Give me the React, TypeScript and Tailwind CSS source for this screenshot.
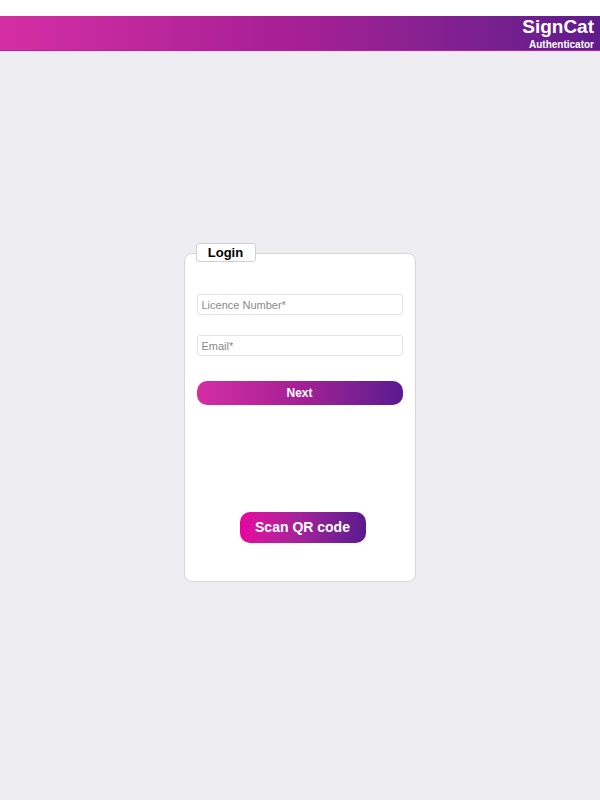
const Header = () => {
    return (
        <div className="bg-white pt-4">
            <div className="h-[35px] bg-gradient-to-r from-[#d52ea4] via-[#a51f94] to-[#601b8c] border-b border-[#c21ba0] flex flex-col items-end justify-center pr-[6px] pt-[2px]">
                <span className="text-white font-bold text-[19px] leading-[20px]">SignCat</span>
                <span className="text-white font-bold text-[10px] leading-[12px] mt-[2px]">Authenticator</span>
            </div>
        </div>
    )
}

const App = () => {
    return (
        <div className="w-[600px] h-[800px] bg-[#eeedf2] font-['Liberation_Sans',Arial,sans-serif]">
            <Header />
            <div className="flex justify-center pt-[202px] pr-[1px]">
                <div className="relative w-[232px] h-[329px] bg-white border border-[#d6d6d8] rounded-[8px] px-3 pt-10">
                    <div className="absolute left-[11px] -top-[11px] w-[60px] h-[19px] bg-white border border-[#cfcfd2] rounded-[3px] flex items-center justify-center">
                        <span className="text-[13px] font-bold text-black leading-none">Login</span>
                    </div>
                    <form className="flex flex-col">
                        <input
                            type="text"
                            placeholder="Licence Number*"
                            className="h-[21px] border border-[#e3e3e6] rounded-[3px] px-1 text-[11px] placeholder:text-[#8a8a8e] outline-none"
                        />
                        <input
                            type="email"
                            placeholder="Email*"
                            className="mt-[20px] h-[21px] border border-[#e3e3e6] rounded-[3px] px-1 text-[11px] placeholder:text-[#8a8a8e] outline-none"
                        />
                        <button
                            type="button"
                            className="mt-[25px] h-[24px] rounded-[10px] bg-gradient-to-r from-[#d52ea4] via-[#a51f94] to-[#5b1890] text-white text-[12px] font-bold">
                            Next
                        </button>
                    </form>
                    <div className="flex justify-center mt-[107px] pl-[6px]">
                        <button
                            type="button"
                            className="w-[126px] h-[31px] rounded-[10px] bg-gradient-to-r from-[#e8009f] to-[#5b1890] text-white text-[14px] font-bold">
                            Scan QR code
                        </button>
                    </div>
                </div>
            </div>
        </div>
    )
}

export default App;
